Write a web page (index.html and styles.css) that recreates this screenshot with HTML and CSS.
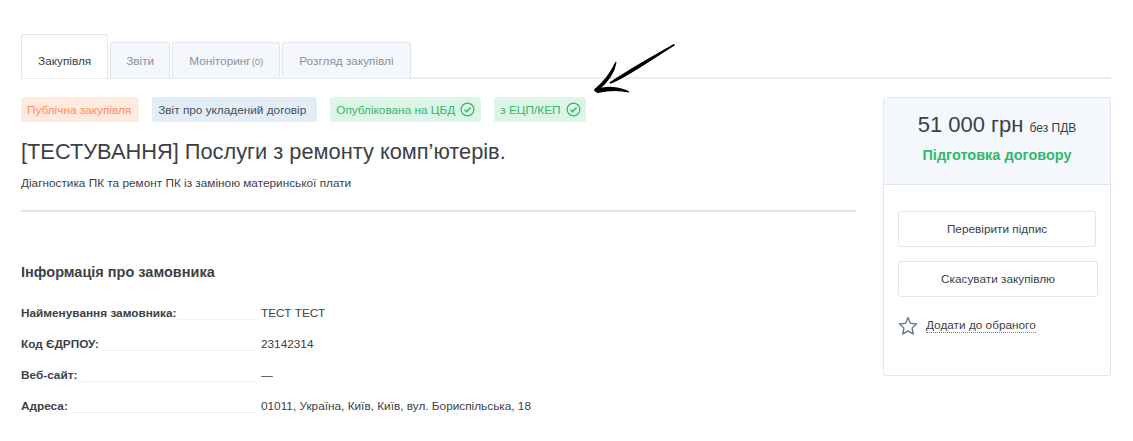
FILE: index.html
```html
<!DOCTYPE html>
<html lang="en">
<head>
    <meta charset="UTF-8">
    <meta name="viewport" content="width=device-width, initial-scale=1.0">
    <title>Закупівля</title>
    <link rel="stylesheet" href="styles.css">
</head>
<body>
    <div class="tabs">
        <a class="tab active">Закупівля</a>
        <a class="tab tab-short">Звіти</a>
        <a class="tab">Моніторинг<span class="tab-count">(0)</span></a>
        <a class="tab">Розгляд закупівлі</a>
    </div>

    <svg class="arrow" width="90" height="60" viewBox="0 0 90 60">
        <path d="M84.5 0.5 C70 9 48 20 20 39 C32 35.5 54 20 84.5 0.5Z" fill="#000" stroke="#000" stroke-width="1.6"/>
        <path d="M26 18 C24.5 28 18 38 7 47 L5 45.5 C14 38 20.5 30 26 18Z" fill="#000" stroke="#000" stroke-width="1.2"/>
        <path d="M5 46.5 C16 41.5 30 43 39 48 C30 46 18 46 8 48.5Z" fill="#000" stroke="#000" stroke-width="1.2"/>
    </svg>

    <div class="content">
        <main class="main">
            <div class="badges">
                <span class="badge badge-orange">Публічна закупівля</span>
                <span class="badge badge-blue">Звіт про укладений договір</span>
                <span class="badge badge-green">Опублікована на ЦБД
                    <svg width="15" height="15" viewBox="0 0 16 16" fill="none" stroke="currentColor" stroke-width="1.3">
                        <circle cx="8" cy="8" r="6.8"/>
                        <path d="M4.8 8.2l2.2 2.2 4.2-4.4" stroke-width="1.6"/>
                    </svg>
                </span>
                <span class="badge badge-green">з ЕЦП/КЕП
                    <svg width="15" height="15" viewBox="0 0 16 16" fill="none" stroke="currentColor" stroke-width="1.3">
                        <circle cx="8" cy="8" r="6.8"/>
                        <path d="M4.8 8.2l2.2 2.2 4.2-4.4" stroke-width="1.6"/>
                    </svg>
                </span>
            </div>
            <h1 class="title">[ТЕСТУВАННЯ] Послуги з ремонту комп’ютерів.</h1>
            <p class="description">Діагностика ПК та ремонт ПК із заміною материнської плати</p>
            <h2 class="section-title">Інформація про замовника</h2>
            <div class="info-row">
                <span class="info-label"><b>Найменування замовника:</b></span>
                <span class="info-value">ТЕСТ ТЕСТ</span>
            </div>
            <div class="info-row">
                <span class="info-label"><b>Код ЄДРПОУ:</b></span>
                <span class="info-value">23142314</span>
            </div>
            <div class="info-row">
                <span class="info-label"><b>Веб-сайт:</b></span>
                <span class="info-value">—</span>
            </div>
            <div class="info-row">
                <span class="info-label"><b>Адреса:</b></span>
                <span class="info-value">01011, Україна, Київ, Київ, вул. Бориспільська, 18</span>
            </div>
        </main>

        <aside class="side">
            <div class="side-head">
                <div class="price">51 000 грн <small>без ПДВ</small></div>
                <div class="status">Підготовка договору</div>
            </div>
            <div class="side-body">
                <button class="side-button first">Перевірити підпис</button>
                <button class="side-button">Скасувати закупівлю</button>
                <div class="favorite">
                    <svg width="20" height="20" viewBox="0 0 20 20" fill="none" stroke="#6f8299" stroke-width="1.5" stroke-linejoin="round">
                        <path d="M10 1.6l2.5 5.6 6.1.7-4.5 4.1 1.2 6-5.3-3-5.3 3 1.2-6L1.4 7.9l6.1-.7z"/>
                    </svg>
                    <span class="favorite-link">Додати до обраного</span>
                </div>
            </div>
        </aside>
    </div>
</body>
</html>
```

FILE: styles.css
```css
:root {
    --text-color: #3c4146;
    --border-color: #e1e5ee;
    --panel-color: #f4f7fb;
    --green-color: #33b86a;
}

html {
    height: 100%;
}

body {
    margin: 0;
    padding: 34px 22px 0 21px;
    height: 441px;
    box-sizing: border-box;
    overflow: hidden;
    position: relative;
    background: #fff;
    color: var(--text-color);
    font-family: "Liberation Sans", Arial, sans-serif;
    font-size: 11.8px;
}

.tabs {
    display: flex;
    align-items: flex-end;
    height: 45px;
    box-sizing: border-box;
    border-bottom: 2px solid #e9ecf3;
}

.tab {
    height: 36px;
    box-sizing: border-box;
    margin-right: 2px;
    margin-bottom: -1px;
    padding: 11px 16px 0;
    background: var(--panel-color);
    border: 1px solid var(--border-color);
    border-bottom: none;
    border-radius: 3px 3px 0 0;
    color: #8a919c;
}

.tab.active {
    height: 44px;
    padding-top: 19px;
    background: #fff;
    color: var(--text-color);
}

.tab.tab-short {
    padding-left: 15px;
    padding-right: 15px;
}

.tab-count {
    margin-left: 1px;
    font-size: 9.5px;
}

.arrow {
    position: absolute;
    left: 590px;
    top: 44px;
}

.content {
    display: flex;
    justify-content: space-between;
    align-items: flex-start;
    margin-top: 18px;
}

.main {
    width: 835px;
}

.badges {
    display: flex;
    gap: 13px;
}

.badge {
    display: flex;
    align-items: center;
    gap: 5px;
    height: 25px;
    padding: 0 6px;
    border-radius: 3px;
}

.badge-orange {
    padding-right: 8px;
    background: #ffeadf;
    color: #ff8a5c;
}

.badge-blue {
    padding-right: 11px;
    background: #e2edf7;
    color: #46505e;
}

.badge-green {
    background: #dcf5e6;
    color: var(--green-color);
}

.badge-green + .badge-green {
    padding-right: 5px;
}

.title {
    margin: 17px 0 0;
    font-size: 21.8px;
    font-weight: normal;
    line-height: 26px;
}

.description {
    margin: 11px 0 0;
    padding-bottom: 20px;
    border-bottom: 2px solid #dfe3e8;
    line-height: 14px;
}

.section-title {
    margin: 52px 0 26px;
    font-size: 14.5px;
    line-height: 16px;
}

.info-row {
    display: flex;
    align-items: flex-end;
    height: 14px;
    margin-bottom: 17px;
}

.info-label {
    display: flex;
    flex: none;
    width: 234px;
    margin-right: 6px;
    border-bottom: 1px dotted #e0e3e8;
    height: 13px;
}

.info-label b {
    margin-bottom: -1px;
    padding-right: 2px;
    background: #fff;
}

.info-value {
    line-height: 14px;
}

.side {
    width: 228px;
    height: 279px;
    box-sizing: border-box;
    border: 1px solid var(--border-color);
    border-radius: 3px;
}

.side-head {
    height: 87px;
    box-sizing: border-box;
    padding-top: 14px;
    background: var(--panel-color);
    border-bottom: 1px solid var(--border-color);
    text-align: center;
}

.price {
    font-size: 22px;
    line-height: 26px;
}

.price small {
    font-size: 12px;
}

.status {
    margin-top: 6px;
    color: var(--green-color);
    font-size: 14.5px;
    font-weight: bold;
}

.side-body {
    padding: 26px 12px 0 14px;
}

.side-button {
    display: block;
    width: 100%;
    height: 36px;
    padding-top: 1px;
    background: #fff;
    border: 1px solid var(--border-color);
    border-radius: 3px;
    color: var(--text-color);
    font-family: inherit;
    font-size: 11.8px;
    cursor: pointer;
}

.side-button.first {
    width: 198px;
    margin-bottom: 14px;
}

.favorite {
    display: flex;
    align-items: center;
    gap: 8px;
    margin-top: 19px;
}

.favorite-link {
    border-bottom: 1px dotted #6f8299;
    line-height: 13px;
}
```
